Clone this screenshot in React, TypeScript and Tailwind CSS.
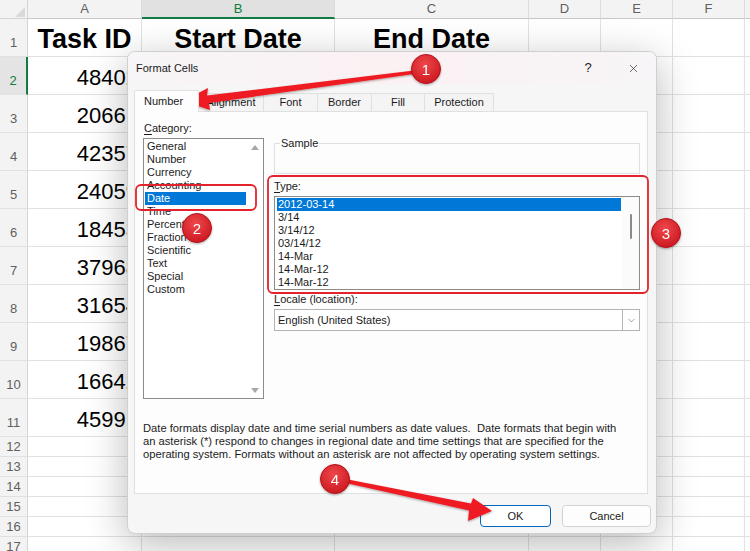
import { X, ChevronDown } from "lucide-react";

const colW = ["w-[114px]", "w-[193px]", "w-[194px]", "w-[72px]", "w-[72px]", "w-[72px]", "w-[10px]"];
const letters = ["A", "B", "C", "D", "E", "F", ""];
const ids = ["48402", "20661", "42357", "24059", "18453", "37968", "31654", "19867", "16642", "45991"];

const categories = [
  "General", "Number", "Currency", "Accounting", "Date", "Time",
  "Percentage", "Fraction", "Scientific", "Text", "Special", "Custom",
];
const types = ["2012-03-14", "3/14", "3/14/12", "03/14/12", "14-Mar", "14-Mar-12", "14-Mar-12"];

const tabs = [
  { label: "Alignment", w: "w-[65px]" },
  { label: "Font", w: "w-[54px]" },
  { label: "Border", w: "w-[54px]" },
  { label: "Fill", w: "w-[53px]" },
  { label: "Protection", w: "w-[69px]" },
];

const Sheet = () => {
  const rows = Array.from({ length: 17 }, (_, i) => i + 1);
  return (
    <div className="flex flex-col">
      {/* column headers */}
      <div className="flex h-[19px]">
        <div className="relative w-[28px] shrink-0 border-r border-b border-[#d4d4d4] bg-[#f3f3f3]">
          <svg className="absolute left-[15px] top-[7px]" width="10" height="10" viewBox="0 0 10 10">
            <polygon points="10,0 10,10 0,10" fill="#d9d9d9" />
          </svg>
        </div>
        {letters.map((l, i) => (
          <div
            key={i}
            className={`${colW[i]} shrink-0 flex items-center justify-center text-[13px] border-r border-[#dcdcdc] ${
              l === "B"
                ? "bg-[#e1e1e1] text-[#107c41] border-b-2 border-b-[#107c41]"
                : "bg-[#f3f3f3] text-[#5f5f5f] border-b border-b-[#c8c8c8]"
            }`}
          >
            {l}
          </div>
        ))}
      </div>
      {rows.map((r) => {
        const tall = r <= 11;
        return (
          <div key={r} className={`flex ${tall ? "h-[38px]" : "h-[20px]"}`}>
            <div
              className={`w-[28px] shrink-0 flex items-end justify-center text-[13px] leading-[15px] border-b border-[#e1e1e1] ${
                tall ? "pb-[6px]" : "pb-[2px]"
              } ${
                r === 2
                  ? "bg-[#e4e4e4] text-[#107c41] border-r-2 border-r-[#107c41]"
                  : "bg-[#f3f3f3] text-[#5f5f5f] border-r border-r-[#d4d4d4]"
              }`}
            >
              {r}
            </div>
            {letters.map((l, i) => (
              <div
                key={i}
                className={`${colW[i]} shrink-0 border-r border-b border-[#e1e1e1] flex items-end ${
                  r === 1 ? "justify-center pb-[2px]" : "justify-end pr-[3px] pb-[4px]"
                }`}
              >
                {r === 1 && i < 3 && (
                  <span className="text-[27px] leading-[30px] font-bold text-black">
                    {["Task ID", "Start Date", "End Date"][i]}
                  </span>
                )}
                {r >= 2 && r <= 11 && i === 0 && (
                  <span className="text-[22px] leading-[25px] text-black">{ids[r - 2]}</span>
                )}
              </div>
            ))}
          </div>
        );
      })}
    </div>
  );
};

const Dialog = () => {
  return (
    <div className="absolute left-[127px] top-[51px] w-[530px] h-[483px] rounded-[8px] border border-[#cfcfcf] bg-[#f7f6f7] shadow-[0_10px_40px_rgba(0,0,0,0.28)] text-[11px] text-[#1b1b1b] flex flex-col overflow-hidden">
      {/* title bar */}
      <div className="h-[32px] shrink-0 flex items-center pl-[8px] bg-gradient-to-r from-[#f7f5f7] via-[#fbf1f3] to-[#f7f5f7]">
        <span className="flex-1">Format Cells</span>
        <span className="w-[20px] text-center text-[13px] mr-[29px]">?</span>
        <X size={13} strokeWidth={1.2} className="mr-[16px] text-[#222]" />
      </div>

      {/* tabs */}
      <div className="mt-[5px] h-[22px] shrink-0 flex items-end pl-[6px]">
        <div className="relative z-10 w-[65px] h-[22px] -mb-px flex items-center pl-[9px] bg-[#fdfdfd] border border-b-0 border-[#e0e0e0] rounded-t-[2px]">
          Number
        </div>
        {tabs.map((t) => (
          <div
            key={t.label}
            className={`${t.w} h-[18px] flex items-center justify-center border-t border-r border-[#e0e0e0] bg-[#f5f4f5]`}
          >
            {t.label}
          </div>
        ))}
      </div>

      {/* panel */}
      <div className="ml-[6px] mr-[8px] h-[383px] shrink-0 border border-[#e0e0e0] bg-[#fdfdfd] pl-[8px] pr-[7px] pt-[10px]">
        <div className="flex">
          {/* category */}
          <div className="w-[121px] shrink-0 flex flex-col">
            <div className="h-[16px] leading-[13px] pl-[1px]">
              <span className="underline underline-offset-2">C</span>ategory:
            </div>
            <div className="h-[261px] border border-[#8c8c8c] bg-white flex">
              <div className="flex-1 pt-[1px] px-[1px]">
                {categories.map((c) => (
                  <div
                    key={c}
                    className={`h-[13px] leading-[13px] pl-[2px] ${c === "Date" ? "bg-[#0078d7] text-white" : ""}`}
                  >
                    {c}
                  </div>
                ))}
              </div>
              <div className="w-[16px] flex flex-col items-center justify-between pt-[6px] pb-[5px]">
                <svg width="8" height="5" viewBox="0 0 8 5">
                  <polygon points="4,0 8,5 0,5" fill="#a8a8a8" />
                </svg>
                <svg width="8" height="5" viewBox="0 0 8 5">
                  <polygon points="0,0 8,0 4,5" fill="#a8a8a8" />
                </svg>
              </div>
            </div>
          </div>

          {/* right column */}
          <div className="ml-[10px] flex-1 flex flex-col pt-[15px]">
            <fieldset className="h-[37px] border border-[#e0e0e0] px-[5px]">
              <legend className="px-[1px] leading-[13px]">Sample</legend>
            </fieldset>
            <div className="mt-[6px] h-[16px] leading-[13px]">
              <span className="underline underline-offset-2">T</span>ype:
            </div>
            <div className="h-[94px] border border-[#8c8c8c] bg-white flex">
              <div className="flex-1 pt-[1px] ml-[2px] mr-[1px]">
                {types.map((t, i) => (
                  <div
                    key={i}
                    className={`h-[13px] leading-[13px] pl-[1px] ${i === 0 ? "bg-[#0078d7] text-white" : ""}`}
                  >
                    {t}
                  </div>
                ))}
              </div>
              <div className="w-[17px] flex justify-center pt-[17px] bg-[#fbfbfb]">
                <div className="w-[2px] h-[25px] rounded-full bg-[#8a8a8a]" />
              </div>
            </div>
            <div className="mt-[3px] h-[16px] leading-[13px]">
              <span className="underline underline-offset-2">L</span>ocale (location):
            </div>
            <div className="h-[22px] border border-[#b4b4b4] bg-white flex items-center">
              <span className="flex-1 pl-[3px]">English (United States)</span>
              <div className="w-[17px] h-full border-l border-[#b4b4b4] flex items-center justify-center">
                <ChevronDown size={11} strokeWidth={1.2} className="text-[#555]" />
              </div>
            </div>
          </div>
        </div>

        <div className="mt-[23px] leading-[13px] text-[11.2px] whitespace-pre">
          <div>Date formats display date and time serial numbers as date values.  Date formats that begin with</div>
          <div>an asterisk (*) respond to changes in regional date and time settings that are specified for the</div>
          <div>operating system. Formats without an asterisk are not affected by operating system settings.</div>
        </div>
      </div>

      {/* buttons */}
      <div className="mt-[11px] flex justify-end gap-[11px] pr-[5px]">
        <button className="w-[71px] h-[22px] rounded-[4px] border border-[#0067c0] bg-white">OK</button>
        <button className="w-[89px] h-[22px] rounded-[4px] border border-[#d3d3d3] bg-[#fdfdfd]">Cancel</button>
      </div>
    </div>
  );
};

const Badge = ({ cx, cy, n }: { cx: number; cy: number; n: number }) => (
  <g filter="url(#shadow)">
    <circle cx={cx} cy={cy} r={14.5} fill="url(#badge)" stroke="#b3141b" strokeWidth={1} />
    <text
      x={cx}
      y={cy + 5.5}
      textAnchor="middle"
      fontSize={15}
      fontFamily="Liberation Sans, Arial, sans-serif"
      fill="#fff"
    >
      {n}
    </text>
  </g>
);

const Annotations = () => (
  <svg className="absolute left-0 top-0 pointer-events-none" width="750" height="551" viewBox="0 0 750 551">
    <defs>
      <radialGradient id="badge" cx="0.45" cy="0.35" r="0.7">
        <stop offset="0" stopColor="#f0484c" />
        <stop offset="1" stopColor="#c9161e" />
      </radialGradient>
      <filter id="shadow" x="-30%" y="-30%" width="160%" height="160%">
        <feDropShadow dx="0" dy="1" stdDeviation="1.3" floodColor="#000" floodOpacity="0.35" />
      </filter>
    </defs>

    {/* highlight boxes */}
    <rect x="136" y="185" width="120" height="25" rx="5" fill="none" stroke="#e3232b" strokeWidth="1.8" />
    <rect x="268" y="176" width="380" height="117" rx="5" fill="none" stroke="#e3232b" strokeWidth="1.8" />

    {/* arrows */}
    <g filter="url(#shadow)">
      <polygon
        points="183,101 208,88 207,95.5 414,70.5 414,74 209,103 210,110"
        fill="#ee1c24"
      />
      <polygon
        points="492,511 473,498 471,503.5 348,479.5 348,483.5 469,510.5 468,521"
        fill="#ee1c24"
      />
    </g>

    <Badge cx={426} cy={69} n={1} />
    <Badge cx={197} cy={228} n={2} />
    <Badge cx={666} cy={233} n={3} />
    <Badge cx={335} cy={479} n={4} />
  </svg>
);

export default function App() {
  return (
    <div className="relative w-[750px] h-[551px] overflow-hidden bg-white font-['Liberation_Sans',Arial,sans-serif]">
      <Sheet />
      <Dialog />
      <Annotations />
    </div>
  );
}
